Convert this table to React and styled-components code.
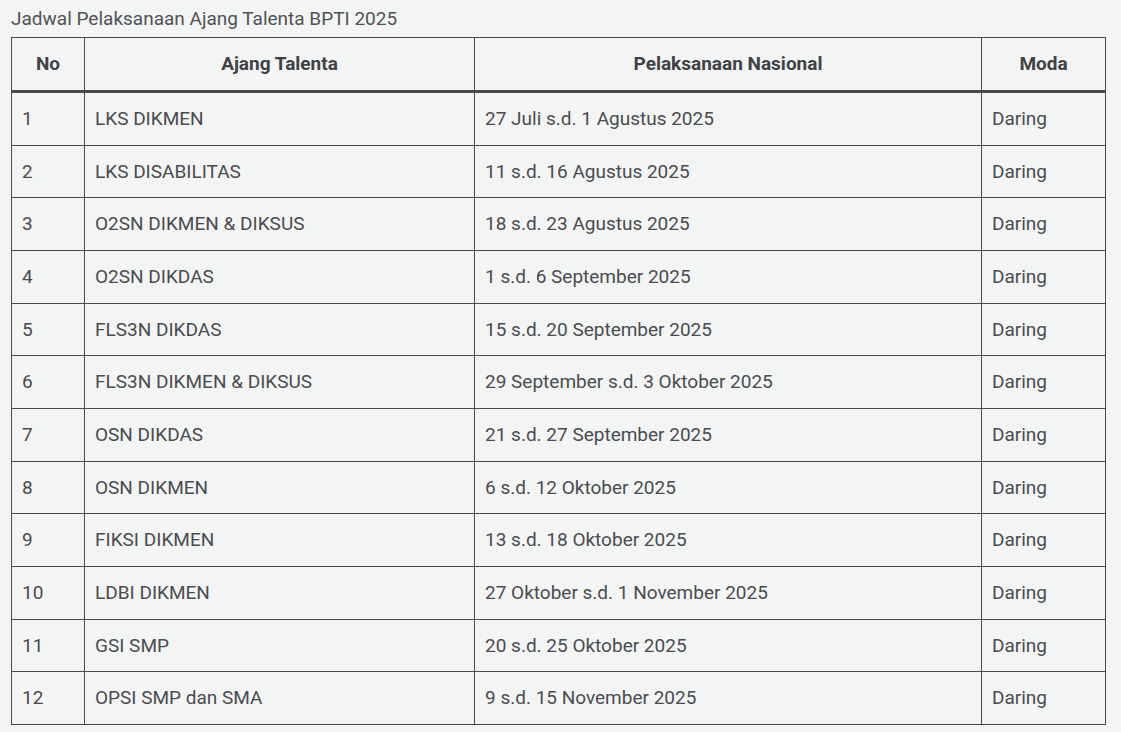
import React from 'react';
import styled, { createGlobalStyle } from 'styled-components';

const GlobalStyle = createGlobalStyle`
  html, body {
    margin: 0;
    background: #f3f4f4;
  }
  body {
    font-family: Roboto, "Liberation Sans", sans-serif;
    color: #4a4c50;
  }
`

const Wrapper = styled.section`
  padding: 6px 15px 0 11px;
`

const Caption = styled.div`
  font-size: 19px;
  line-height: 25px;
  font-weight: 400;
  color: #505256;
  margin-bottom: 6px;
`

const Table = styled.table`
  width: 1094px;
  border-collapse: collapse;
  table-layout: fixed;
  font-size: 19px;
`

const Col = styled.col`
  width: ${p => p.w}px;
`

const HeadCell = styled.th`
  border: 1px solid #4a4a4c;
  border-bottom: 3px solid #4a4a4c;
  padding: 12px 10px;
  line-height: 28px;
  font-weight: 700;
  color: #3f4246;
  text-align: center;
`

const Cell = styled.td`
  border: 1px solid #4a4a4c;
  padding: 12px 10px;
  line-height: 27.67px;
  font-weight: 400;
  color: #4a4c50;
  text-align: left;
`

const rows = [
  ['1', 'LKS DIKMEN', '27 Juli s.d. 1 Agustus 2025'],
  ['2', 'LKS DISABILITAS', '11 s.d. 16 Agustus 2025'],
  ['3', 'O2SN DIKMEN & DIKSUS', '18 s.d. 23 Agustus 2025'],
  ['4', 'O2SN DIKDAS', '1 s.d. 6 September 2025'],
  ['5', 'FLS3N DIKDAS', '15 s.d. 20 September 2025'],
  ['6', 'FLS3N DIKMEN & DIKSUS', '29 September s.d. 3 Oktober 2025'],
  ['7', 'OSN DIKDAS', '21 s.d. 27 September 2025'],
  ['8', 'OSN DIKMEN', '6 s.d. 12 Oktober 2025'],
  ['9', 'FIKSI DIKMEN', '13 s.d. 18 Oktober 2025'],
  ['10', 'LDBI DIKMEN', '27 Oktober s.d. 1 November 2025'],
  ['11', 'GSI SMP', '20 s.d. 25 Oktober 2025'],
  ['12', 'OPSI SMP dan SMA', '9 s.d. 15 November 2025'],
]

const App = () => {
  return (
    <>
      <GlobalStyle />
      <Wrapper>
        <Caption>Jadwal Pelaksanaan Ajang Talenta BPTI 2025</Caption>
        <Table>
          <colgroup>
            <Col w={73} />
            <Col w={390} />
            <Col w={507} />
            <Col w={124} />
          </colgroup>
          <thead>
            <tr>
              <HeadCell>No</HeadCell>
              <HeadCell>Ajang Talenta</HeadCell>
              <HeadCell>Pelaksanaan Nasional</HeadCell>
              <HeadCell>Moda</HeadCell>
            </tr>
          </thead>
          <tbody>
            {rows.map(r => (
              <tr key={r[0]}>
                <Cell>{r[0]}</Cell>
                <Cell>{r[1]}</Cell>
                <Cell>{r[2]}</Cell>
                <Cell>Daring</Cell>
              </tr>
            ))}
          </tbody>
        </Table>
      </Wrapper>
    </>
  )
}

export default App;
